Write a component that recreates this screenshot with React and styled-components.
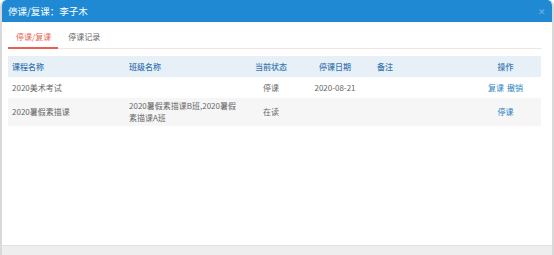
import React from 'react';
import styled, { createGlobalStyle } from 'styled-components';

const GlobalStyle = createGlobalStyle`
  html, body {
    margin: 0;
    padding: 0;
    background: #ffffff;
  }
  body {
    font-family: "Noto Sans CJK SC", "Noto Sans", sans-serif;
  }
`;

const Modal = styled.div`
  width: 554px;
  height: 255px;
  box-sizing: border-box;
  display: flex;
  flex-direction: column;
  background: #fff;
  border-left: 2px solid #d9d9d9;
  border-right: 2px solid #d9d9d9;
  border-radius: 6px 6px 0 0;
  overflow: hidden;
`;

const Header = styled.div`
  height: 22px;
  flex-shrink: 0;
  background: #1f8ad3;
  display: flex;
  align-items: center;
  justify-content: space-between;
  padding: 0 8px 0 8px;
  margin: 0 -2px;
  border-radius: 6px 6px 0 0;
`;

const Title = styled.div`
  color: #fff;
  font-size: 9.5px;
  line-height: 22px;
`;

const Close = styled.span`
  color: #6fb2e2;
  font-size: 9px;
  line-height: 1;
`;

const Body = styled.div`
  flex: 1;
  padding: 6px 10px 0 6px;
`;

const Tabs = styled.div`
  display: flex;
  border-bottom: 1px solid #f3e3e1;
  height: 20px;
  margin-bottom: 7px;
`;

const Tab = styled.div`
  font-size: 8px;
  line-height: 18px;
  white-space: nowrap;
  padding: 0 7px 0 8px;
  margin-right: 2px;
  color: ${p => (p.$active ? '#e8614f' : '#666')};
  border-bottom: 2px solid ${p => (p.$active ? '#e8614f' : 'transparent')};
  margin-bottom: -1px;
`;

const Table = styled.table`
  width: 533px;
  border-collapse: collapse;
  table-layout: fixed;
  font-size: 8px;
`;

const Th = styled.th`
  background: #e6f0f6;
  color: #3a77b4;
  font-weight: 500;
  height: 21px;
  padding: 0 4px;
  text-align: ${p => p.$align || 'left'};
`;

const Row = styled.tr`
  background: ${p => (p.$striped ? '#f6f6f6' : '#fff')};
`;

const Td = styled.td`
  color: #666;
  padding: 0 ${p => p.$pr || 4}px 0 4px;
  height: ${p => p.$h || 21}px;
  line-height: 12px;
  word-break: break-all;
  text-align: ${p => p.$align || 'left'};
  vertical-align: middle;
`;

const Action = styled.span`
  color: #2a7fc4;
  & + & {
    margin-left: 3px;
  }
`;

const Footer = styled.div`
  height: 9px;
  flex-shrink: 0;
  background: #eeeeee;
  border-top: 1px solid #e2e2e2;
`;

const rows = [
  {
    course: '2020美术考试',
    klass: '',
    status: '停课',
    date: '2020-08-21',
    note: '',
    actions: ['复课', '撤销'],
  },
  {
    course: '2020暑假素描课',
    klass: '2020暑假素描课B班,2020暑假素描课A班',
    status: '在读',
    date: '',
    note: '',
    actions: ['停课'],
  },
];

export default function App() {
  return (
    <>
      <GlobalStyle />
      <Modal>
        <Header>
          <Title>停课/复课：李子木</Title>
          <Close>✕</Close>
        </Header>
        <Body>
          <Tabs>
            <Tab $active>停课/复课</Tab>
            <Tab>停课记录</Tab>
          </Tabs>
          <Table>
            <colgroup>
              <col style={{ width: 117 }} />
              <col style={{ width: 120 }} />
              <col style={{ width: 52 }} />
              <col style={{ width: 76 }} />
              <col style={{ width: 97 }} />
              <col style={{ width: 71 }} />
            </colgroup>
            <thead>
              <tr>
                <Th>课程名称</Th>
                <Th>班级名称</Th>
                <Th $align="center">当前状态</Th>
                <Th $align="center">停课日期</Th>
                <Th>备注</Th>
                <Th $align="center">操作</Th>
              </tr>
            </thead>
            <tbody>
              {rows.map((r, i) => (
                <Row key={i} $striped={i % 2 === 1}>
                  <Td $h={i === 1 ? 28 : 21}>{r.course}</Td>
                  <Td $pr={6}>{r.klass}</Td>
                  <Td $align="center">{r.status}</Td>
                  <Td $align="center">{r.date}</Td>
                  <Td>{r.note}</Td>
                  <Td $align="center">
                    {r.actions.map(a => (
                      <Action key={a}>{a}</Action>
                    ))}
                  </Td>
                </Row>
              ))}
            </tbody>
          </Table>
        </Body>
        <Footer />
      </Modal>
    </>
  );
}
